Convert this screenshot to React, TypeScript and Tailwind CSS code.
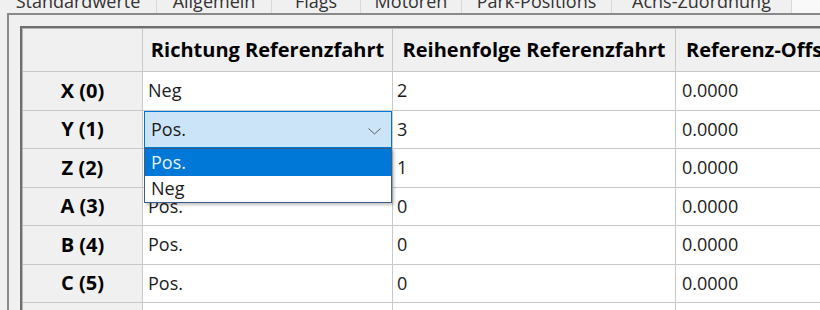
import React from "react";

const rows = [
  { h: "X (0)", d: "Neg", o: "2", off: "0.0000" },
  { h: "Y (1)", d: "Pos.", o: "3", off: "0.0000", combo: true },
  { h: "Z (2)", d: "Pos.", o: "1", off: "0.0000" },
  { h: "A (3)", d: "Pos.", o: "0", off: "0.0000" },
  { h: "B (4)", d: "Pos.", o: "0", off: "0.0000" },
  { h: "C (5)", d: "Pos.", o: "0", off: "0.0000" },
  { h: "", d: "", o: "", off: "" },
];

const tabs = [
  { t: "Standardwerte", w: "w-[157px]" },
  { t: "Allgemein", w: "w-[115px]" },
  { t: "Flags", w: "w-[89px]" },
  { t: "Motoren", w: "w-[101px]" },
  { t: "Park-Positions", w: "w-[150px]" },
  { t: "Achs-Zuordnung", w: "w-[180px]" },
];

export default function App() {
  return (
    <div
      className="w-[820px] h-[310px] overflow-hidden bg-[#f0f0f0] text-[#1b1b1b] flex flex-col"
      style={{ fontFamily: '"Open Sans", "Noto Sans", sans-serif' }}
    >
      {/* tab strip (cut off at top) */}
      <div className="h-[13px] shrink-0 flex overflow-hidden bg-[#fafafa]">
        {tabs.map((t) => (
          <div
            key={t.t}
            className={`${t.w} shrink-0 h-[13px] bg-[#f0f0f0] border-r border-[#d9d9d9] flex justify-center overflow-hidden`}
          >
            <span className="text-[18px] leading-[24px] -mt-[11px] whitespace-nowrap text-[#333]">{t.t}</span>
          </div>
        ))}
        <div className="flex-1 bg-[#f9f9f9]" />
      </div>

      {/* tab pane */}
      <div className="flex-1 ml-[7px] border-l-2 border-t-2 border-[#8a8a8a] pl-[11px] pt-[11px] bg-[#f0f0f0]">
        <div className="border-l-2 border-t-2 border-[#6e6e6e] h-full">
          <div className="border-l border-t border-[#b4b4b4] h-full bg-white">
            {/* header */}
            <div className="flex h-[43px] font-bold text-[20px] text-black">
              <div className="w-[120px] shrink-0 bg-[#f0f0f0] border-r border-b border-[#c8c8c8]" />
              <div className="w-[250px] shrink-0 bg-[#f0f0f0] border-r border-b border-[#c8c8c8] flex items-center justify-center whitespace-nowrap">
                Richtung Referenzfahrt
              </div>
              <div className="w-[283px] shrink-0 bg-[#f0f0f0] border-r border-b border-[#c8c8c8] flex items-center justify-center whitespace-nowrap">
                Reihenfolge Referenzfahrt
              </div>
              <div className="w-[200px] shrink-0 bg-[#f0f0f0] border-r border-b border-[#c8c8c8] flex items-center pl-[10px] whitespace-nowrap overflow-hidden">
                Referenz-Offset
              </div>
            </div>
            {rows.map((r, i) => (
              <div key={i} className="flex h-[38.5px] text-[18px]">
                <div className="w-[120px] shrink-0 bg-[#f0f0f0] border-r border-b border-[#c8c8c8] flex items-center justify-center font-bold text-[20px] text-black">
                  {r.h}
                </div>
                <div className="w-[250px] shrink-0 border-r border-b border-[#c8c8c8] flex items-center relative">
                  {r.combo ? (
                    <>
                      <div className="absolute left-[1px] right-0 top-0 bottom-0 bg-[#cce4f7] border border-[#0078d7] flex items-center pl-[6px]">
                        <span>{r.d}</span>
                        <svg
                          className="absolute right-[10px] top-[16px]"
                          width="13"
                          height="7"
                          viewBox="0 0 13 7"
                        >
                          <path d="M0.5 0.5 L6.5 6 L12.5 0.5" fill="none" stroke="#606060" strokeWidth="1" />
                        </svg>
                      </div>
                      <div className="absolute left-[1px] right-0 top-[37px] z-10 bg-white border border-[#3d5f86] shadow-[2px_2px_3px_rgba(0,0,0,0.25)]">
                        <div className="h-[27px] bg-[#0078d7] text-[#e8f2fc] flex items-center pl-[6px]">Pos.</div>
                        <div className="h-[26px] flex items-center pl-[6px]">Neg</div>
                      </div>
                    </>
                  ) : (
                    <span className="pl-[5px]">{r.d}</span>
                  )}
                </div>
                <div className="w-[283px] shrink-0 border-r border-b border-[#c8c8c8] flex items-center pl-[4px]">
                  {r.o}
                </div>
                <div className="w-[200px] shrink-0 border-r border-b border-[#c8c8c8] flex items-center pl-[6px]">
                  {r.off}
                </div>
              </div>
            ))}
          </div>
        </div>
      </div>
    </div>
  );
}
